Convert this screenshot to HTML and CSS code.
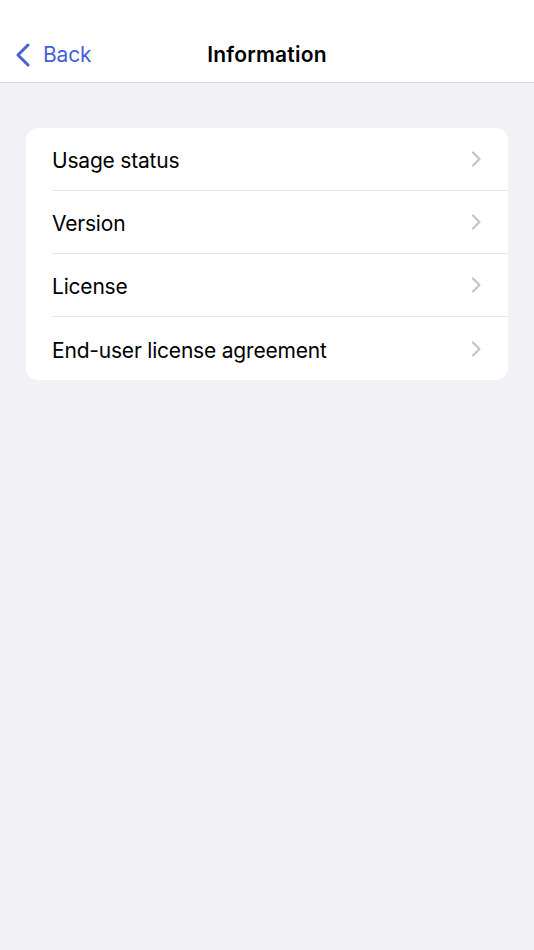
FILE: index.html
```html
<!DOCTYPE html>
<html>
<head>
    <meta charset="UTF-8">
    <title>Information</title>
    <link rel="stylesheet" href="styles.css">
</head>
<body>
    <div class="header">
        <div class="back-button">
            <svg class="back-icon" width="16" height="24" viewBox="0 0 16 24">
                <path d="M13 2 L3 12 L13 22" fill="none" stroke="#4760d8" stroke-width="3" stroke-linecap="round" stroke-linejoin="round"/>
            </svg>
            <span class="back-label">Back</span>
        </div>
        <div class="header-title">Information</div>
    </div>

    <div class="content">
        <div class="list">
            <div class="list-item">
                <span class="item-label">Usage status</span>
                <svg class="chevron" width="10" height="16" viewBox="0 0 10 16"><path d="M2 1.5 L8.5 8 L2 14.5" fill="none" stroke="#c4c4c7" stroke-width="2.2" stroke-linecap="round" stroke-linejoin="round"/></svg>
            </div>
            <div class="list-item">
                <span class="item-label">Version</span>
                <svg class="chevron" width="10" height="16" viewBox="0 0 10 16"><path d="M2 1.5 L8.5 8 L2 14.5" fill="none" stroke="#c4c4c7" stroke-width="2.2" stroke-linecap="round" stroke-linejoin="round"/></svg>
            </div>
            <div class="list-item">
                <span class="item-label">License</span>
                <svg class="chevron" width="10" height="16" viewBox="0 0 10 16"><path d="M2 1.5 L8.5 8 L2 14.5" fill="none" stroke="#c4c4c7" stroke-width="2.2" stroke-linecap="round" stroke-linejoin="round"/></svg>
            </div>
            <div class="list-item">
                <span class="item-label">End-user license agreement</span>
                <svg class="chevron" width="10" height="16" viewBox="0 0 10 16"><path d="M2 1.5 L8.5 8 L2 14.5" fill="none" stroke="#c4c4c7" stroke-width="2.2" stroke-linecap="round" stroke-linejoin="round"/></svg>
            </div>
        </div>
    </div>
</body>
</html>
```

FILE: styles.css
```css
body {
    font-family: Inter, "Noto Sans", sans-serif;
    margin: 0;
    padding: 0;
    background-color: #f1f1f6;
    color: #000000;
    min-height: 950px;
}

.header {
    position: relative;
    height: 83px;
    background-color: #ffffff;
    border-bottom: 1px solid #d8d8dc;
    display: flex;
    align-items: center;
    justify-content: center;
    box-sizing: border-box;
    padding-top: 26px;
}

.back-button {
    position: absolute;
    left: 15px;
    top: 42px;
    display: flex;
    align-items: center;
    color: #4760d8;
}

.back-icon {
    display: block;
}

.back-label {
    font-size: 21px;
    margin-left: 12px;
    letter-spacing: -0.2px;
}

.header-title {
    font-size: 21px;
    font-weight: 600;
    letter-spacing: 0.2px;
}

.content {
    padding: 45px 26px 0 26px;
}

.list {
    background-color: #ffffff;
    border-radius: 12px;
    overflow: hidden;
}

.list-item {
    height: 63px;
    margin-left: 26px;
    padding-right: 27px;
    padding-top: 3px;
    display: flex;
    align-items: center;
    justify-content: space-between;
    border-bottom: 1px solid #e6e6ea;
    box-sizing: border-box;
}

.list-item:last-child {
    border-bottom: none;
}

.item-label {
    font-size: 21px;
    letter-spacing: -0.2px;
}

.chevron {
    display: block;
    margin-top: -3px;
}
```
